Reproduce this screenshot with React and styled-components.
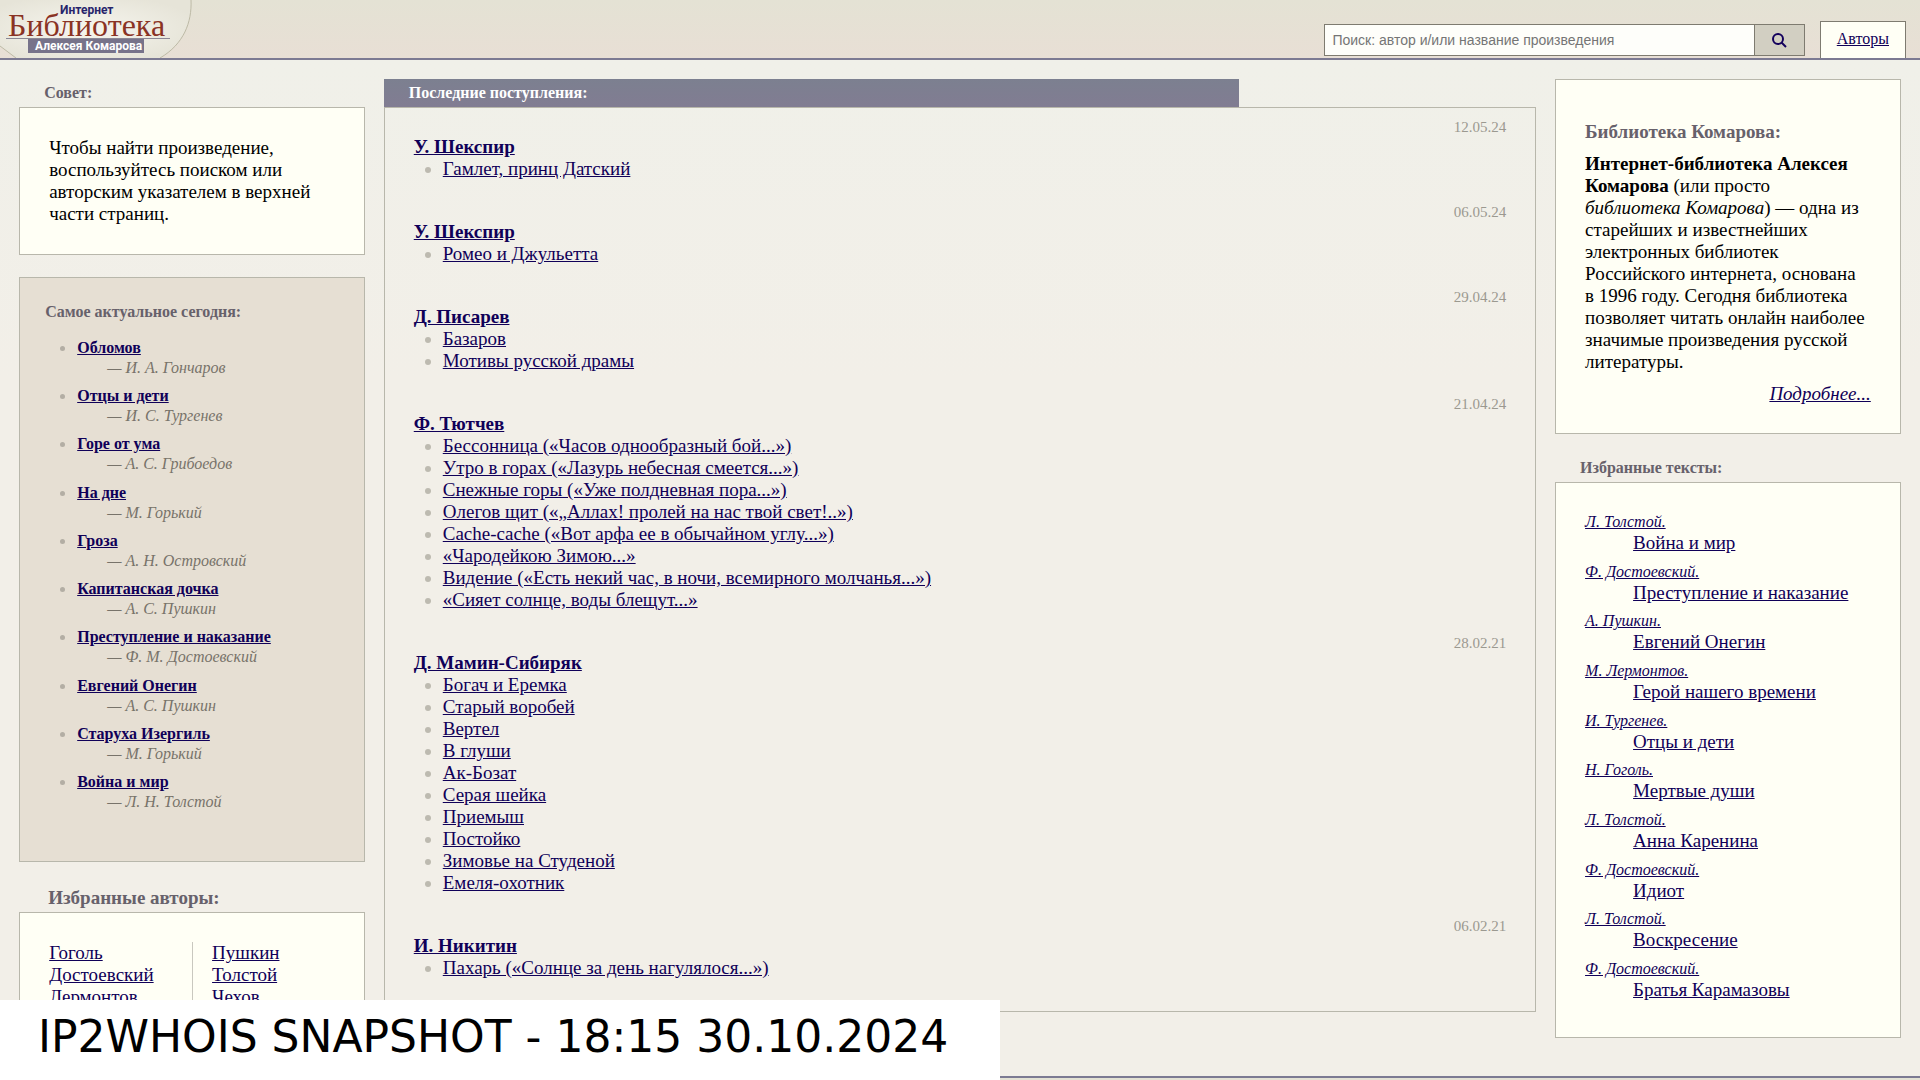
import React from "react";
import styled, { createGlobalStyle } from "styled-components";

// #region data
const popular = [
  ["Обломов", "И. А. Гончаров"],
  ["Отцы и дети", "И. С. Тургенев"],
  ["Горе от ума", "А. С. Грибоедов"],
  ["На дне", "М. Горький"],
  ["Гроза", "А. Н. Островский"],
  ["Капитанская дочка", "А. С. Пушкин"],
  ["Преступление и наказание", "Ф. М. Достоевский"],
  ["Евгений Онегин", "А. С. Пушкин"],
  ["Старуха Изергиль", "М. Горький"],
  ["Война и мир", "Л. Н. Толстой"],
];

const favouriteAuthors = [
  ["Гоголь", "Достоевский", "Лермонтов"],
  ["Пушкин", "Толстой", "Чехов"],
];

const arrivals = [
  { date: "12.05.24", author: "У. Шекспир", works: ["Гамлет, принц Датский"] },
  { date: "06.05.24", author: "У. Шекспир", works: ["Ромео и Джульетта"] },
  {
    date: "29.04.24",
    author: "Д. Писарев",
    works: ["Базаров", "Мотивы русской драмы"],
  },
  {
    date: "21.04.24",
    author: "Ф. Тютчев",
    works: [
      "Бессонница («Часов однообразный бой...»)",
      "Утро в горах («Лазурь небесная смеется...»)",
      "Снежные горы («Уже полдневная пора...»)",
      "Олегов щит («„Аллах! пролей на нас твой свет!..»)",
      "Cache-cache («Вот арфа ее в обычайном углу...»)",
      "«Чародейкою Зимою...»",
      "Видение («Есть некий час, в ночи, всемирного молчанья...»)",
      "«Сияет солнце, воды блещут...»",
    ],
  },
  {
    date: "28.02.21",
    author: "Д. Мамин-Сибиряк",
    works: [
      "Богач и Еремка",
      "Старый воробей",
      "Вертел",
      "В глуши",
      "Ак-Бозат",
      "Серая шейка",
      "Приемыш",
      "Постойко",
      "Зимовье на Студеной",
      "Емеля-охотник",
    ],
  },
  {
    date: "06.02.21",
    author: "И. Никитин",
    works: ["Пахарь («Солнце за день нагулялося...»)"],
  },
];

const favouriteTexts = [
  ["Л. Толстой.", "Война и мир"],
  ["Ф. Достоевский.", "Преступление и наказание"],
  ["А. Пушкин.", "Евгений Онегин"],
  ["М. Лермонтов.", "Герой нашего времени"],
  ["И. Тургенев.", "Отцы и дети"],
  ["Н. Гоголь.", "Мертвые души"],
  ["Л. Толстой.", "Анна Каренина"],
  ["Ф. Достоевский.", "Идиот"],
  ["Л. Толстой.", "Воскресение"],
  ["Ф. Достоевский.", "Братья Карамазовы"],
];
// #endregion

// #region styled-components
const GlobalStyle = createGlobalStyle`
  * {
    box-sizing: border-box;
  }
  body {
    margin: 0;
    background: #f1efe8;
    color: #000;
    font-family: "Liberation Serif", "Times New Roman", serif;
    font-size: 19px;
    line-height: 22px;
  }
  h1, h2, p, ul {
    margin: 0;
    padding: 0;
  }
  ul {
    list-style: none;
  }
  a {
    color: #100058;
  }
`;

const Header = styled.header`
  display: flex;
  align-items: flex-end;
  height: 60px;
  padding-right: 14px;
  border-bottom: 2px solid #7c7a92;
  background: linear-gradient(#e4e2d4, #e8dfd5);
`;

const LogoLink = styled.a`
  align-self: flex-start;
  margin-right: auto;

  svg {
    display: block;
  }
`;

const SearchForm = styled.form`
  display: flex;
  width: 25.2%;
  height: 32px;
  margin: 0 15px 2px 0;
  border: 1px solid #7e7b70;
`;

const SearchInput = styled.input`
  flex: 1;
  min-width: 0;
  padding: 0 7px;
  border: 0;
  border-right: 1px solid #7e7b70;
  background: #fefefa;
  font-family: "Liberation Sans", Arial, sans-serif;
  font-size: 14px;

  &::placeholder {
    color: #757575;
  }
`;

const SearchButton = styled.button`
  display: flex;
  align-items: center;
  justify-content: center;
  width: 49px;
  padding: 0;
  border: 0;
  background: #d2cfc2;
`;

const Tab = styled.a`
  height: 37px;
  padding: 0 16px;
  border: 1px solid #7e7b70;
  border-bottom: 0;
  background: #fffff5;
  font-size: 16px;
  line-height: 34px;
`;

const Page = styled.main`
  display: grid;
  grid-template-columns: 18fr 60fr 18fr;
  column-gap: 1%;
  align-items: start;
  padding: 19px 1% 38px;
  background: linear-gradient(#f0f0e9, #f2efe8 320px);
`;

const Column = styled.div`
  display: flex;
  flex-direction: column;
  gap: ${(props) => props.$gap}px;
`;

const Heading = styled.h2`
  padding-left: ${(props) => (props.$large ? 29 : 25)}px;
  color: #67616b;
  font-size: ${(props) => (props.$large ? 19 : 16)}px;
  line-height: 28px;
`;

const BarHeading = styled(Heading)`
  width: 74.2%;
  background: linear-gradient(#7c8090, #817c92);
  color: #fff;
`;

const Panel = styled.div`
  padding: 29px;
  border: 1px solid #b8b7ab;
  background: #fffff5;
`;

const PopularPanel = styled(Panel)`
  padding: 24px 25px 49px;
  background: #e6dfd3;
`;

const PopularHeading = styled.h2`
  margin-bottom: 16px;
  color: #67616b;
  font-size: 16px;
  line-height: 20px;
`;

const PopularList = styled.ul`
  display: flex;
  flex-direction: column;
  justify-content: space-between;
  min-height: 474px;
  padding-left: 32px;
  font-size: 16px;
  line-height: 20px;
`;

const Bulleted = styled.li`
  position: relative;

  &::before {
    content: "";
    position: absolute;
    top: 50%;
    left: -18px;
    width: 6px;
    height: 6px;
    margin-top: -2px;
    border-radius: 50%;
    background: #bdbab0;
  }
`;

const PopularItem = styled(Bulleted)`
  font-weight: bold;

  &::before {
    top: 10px;
    left: -17px;
    width: 5px;
    height: 5px;
    background: #b3aea4;
  }
`;

const Byline = styled.div`
  padding-left: 30px;
  color: #78736a;
  font-style: italic;
  font-weight: normal;
`;

const AuthorColumns = styled.div`
  display: grid;
  grid-template-columns: 1fr 1fr;

  ul + ul {
    padding-left: 19px;
    border-left: 1px solid #c9c8bf;
  }
`;

const ArrivalsPanel = styled(Panel)`
  padding: 10px 29px 9px;
  background: transparent;
`;

const Arrival = styled.article`
  margin-bottom: 23px;

  time {
    display: block;
    color: #9b9990;
    font-size: 15px;
    line-height: 18px;
    text-align: right;
  }
  ul {
    padding-left: 29px;
  }
`;

const AboutPanel = styled(Panel)`
  padding: 41px 29px 28px;

  h1 {
    margin-bottom: 10px;
    color: #67616b;
    font-size: 19px;
    line-height: 22px;
  }
`;

const More = styled.p`
  margin-top: 10px;
  font-style: italic;
  text-align: right;
`;

const TextsPanel = styled(Panel)`
  padding-bottom: 36px;
`;

const TextsList = styled.ul`
  display: flex;
  flex-direction: column;
  justify-content: space-between;
  min-height: 489px;
`;

const TextAuthor = styled.div`
  font-size: 16px;
  font-style: italic;
  line-height: 20px;
`;

const TextTitle = styled.div`
  padding-left: 48px;
`;

const Footer = styled.footer`
  height: 4px;
  border-top: 2px solid #7c7a92;
  background: #e4e2d4;
`;

const SnapshotBanner = styled.div`
  position: fixed;
  bottom: 0;
  left: 0;
  width: 1000px;
  height: 80px;
  padding-left: 38px;
  background: #fff;
  color: #000;
  font-family: "DejaVu Sans", sans-serif;
  font-size: 44px;
  line-height: 74px;
  white-space: nowrap;
`;
// #endregion

// #region components
const Logo = () => (
  <svg width="194" height="58" viewBox="0 0 194 58" aria-hidden="true">
    <defs>
      <radialGradient id="glow" cx="45%" cy="50%" r="60%">
        <stop offset="0" stopColor="#f6f5ee" />
        <stop offset="1" stopColor="#e6e4d8" />
      </radialGradient>
    </defs>
    <path d="M0 0H191C192 22 184 44 160 58H16L0 46Z" fill="url(#glow)" />
    <path
      d="M191 0C192 22 184 44 160 58M0 46L16 58"
      fill="none"
      stroke="#bdbaa6"
    />
    <text
      x="60"
      y="14"
      fill="#27246b"
      fontFamily="Roboto, sans-serif"
      fontWeight="700"
      fontSize="12"
    >
      Интернет
    </text>
    <text
      x="8"
      y="36"
      fill="#8a3324"
      fontFamily="Liberation Serif, serif"
      fontSize="32"
    >
      Библиотека
    </text>
    <rect x="6" y="38" width="164" height="1" fill="#8b8795" />
    <rect x="28" y="39" width="116" height="14" fill="#77738a" />
    <text
      x="35"
      y="50"
      fill="#fff"
      fontFamily="Roboto, sans-serif"
      fontWeight="700"
      fontSize="12"
    >
      Алексея Комарова
    </text>
  </svg>
);

const SearchIcon = () => (
  <svg width="16" height="16" viewBox="0 0 16 16" aria-hidden="true">
    <circle cx="7" cy="7" r="5" fill="none" stroke="#14005c" strokeWidth="2" />
    <path d="M10.5 10.5L15 15" stroke="#14005c" strokeWidth="2" />
  </svg>
);

const App = () => {
  return (
    <>
      <GlobalStyle />
      <Header>
        <LogoLink href="#" aria-label="Интернет-библиотека Алексея Комарова">
          <Logo />
        </LogoLink>
        <SearchForm>
          <SearchInput
            type="text"
            aria-label="Поиск"
            placeholder="Поиск: автор и/или название произведения"
          />
          <SearchButton type="button" aria-label="Найти">
            <SearchIcon />
          </SearchButton>
        </SearchForm>
        <Tab href="#">Авторы</Tab>
      </Header>

      <Page>
        <Column $gap={22}>
          <section>
            <Heading>Совет:</Heading>
            <Panel>
              <p>
                Чтобы найти произведение, воспользуйтесь поиском или авторским
                указателем в верхней части страниц.
              </p>
            </Panel>
          </section>
          <PopularPanel>
            <PopularHeading>Самое актуальное сегодня:</PopularHeading>
            <PopularList>
              {popular.map(([title, author]) => (
                <PopularItem key={title}>
                  <a href="#">{title}</a>
                  <Byline>— {author}</Byline>
                </PopularItem>
              ))}
            </PopularList>
          </PopularPanel>
          <section>
            <Heading $large>Избранные авторы:</Heading>
            <Panel>
              <AuthorColumns>
                {favouriteAuthors.map((names) => (
                  <ul key={names[0]}>
                    {names.map((name) => (
                      <li key={name}>
                        <a href="#">{name}</a>
                      </li>
                    ))}
                  </ul>
                ))}
              </AuthorColumns>
            </Panel>
          </section>
        </Column>

        <section>
          <BarHeading>Последние поступления:</BarHeading>
          <ArrivalsPanel>
            {arrivals.map(({ date, author, works }) => (
              <Arrival key={date}>
                <time>{date}</time>
                <b>
                  <a href="#">{author}</a>
                </b>
                <ul>
                  {works.map((work) => (
                    <Bulleted key={work}>
                      <a href="#">{work}</a>
                    </Bulleted>
                  ))}
                </ul>
              </Arrival>
            ))}
          </ArrivalsPanel>
        </section>

        <Column $gap={20}>
          <AboutPanel>
            <h1>Библиотека Комарова:</h1>
            <p>
              <b>Интернет-библиотека Алексея Комарова</b> (или просто{" "}
              <i>библиотека&nbsp;Комарова</i>)&nbsp;— одна из старейших
              и&nbsp;известнейших электронных библиотек Российского интернета,
              основана в&nbsp;1996 году. Сегодня библиотека позволяет читать
              онлайн наиболее значимые произведения русской литературы.
            </p>
            <More>
              <a href="#">Подробнее...</a>
            </More>
          </AboutPanel>
          <section>
            <Heading>Избранные тексты:</Heading>
            <TextsPanel>
              <TextsList>
                {favouriteTexts.map(([author, title]) => (
                  <li key={title}>
                    <TextAuthor>
                      <a href="#">{author}</a>
                    </TextAuthor>
                    <TextTitle>
                      <a href="#">{title}</a>
                    </TextTitle>
                  </li>
                ))}
              </TextsList>
            </TextsPanel>
          </section>
        </Column>
      </Page>
      <Footer />

      <SnapshotBanner>IP2WHOIS SNAPSHOT - 18:15 30.10.2024</SnapshotBanner>
    </>
  );
};
// #endregion

export default App;
